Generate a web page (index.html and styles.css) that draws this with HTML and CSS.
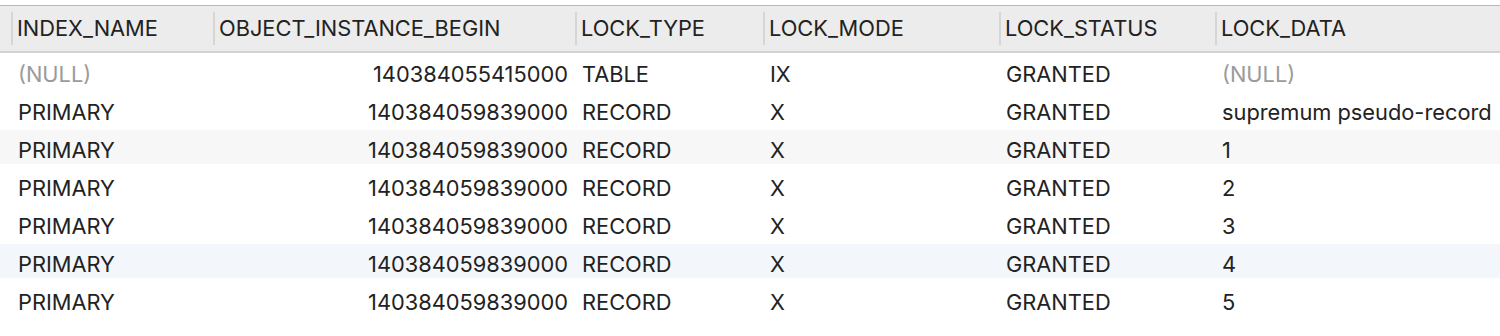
FILE: index.html
```html
<!DOCTYPE html>
<html lang="en">
    <head>
        <meta charset="utf-8" />
        <title>data_locks</title>
        <link rel="stylesheet" href="styles.css">
    </head>
    <body>
        <div id="grid">
            <div class="head">
                <div class="gutter"></div>
                <div class="col">INDEX_NAME</div>
                <div class="col">OBJECT_INSTANCE_BEGIN</div>
                <div class="col">LOCK_TYPE</div>
                <div class="col">LOCK_MODE</div>
                <div class="col">LOCK_STATUS</div>
                <div class="col">LOCK_DATA</div>
            </div>

            <div class="rows">
                <div class="row">
                    <div class="gutter"></div>
                    <div class="cell null">(NULL)</div>
                    <div class="cell num">140384055415000</div>
                    <div class="cell">TABLE</div>
                    <div class="cell">IX</div>
                    <div class="cell">GRANTED</div>
                    <div class="cell null">(NULL)</div>
                </div>
                <div class="row">
                    <div class="gutter"></div>
                    <div class="cell">PRIMARY</div>
                    <div class="cell num">140384059839000</div>
                    <div class="cell">RECORD</div>
                    <div class="cell">X</div>
                    <div class="cell">GRANTED</div>
                    <div class="cell">supremum pseudo-record</div>
                </div>
                <div class="row alt">
                    <div class="gutter"></div>
                    <div class="cell">PRIMARY</div>
                    <div class="cell num">140384059839000</div>
                    <div class="cell">RECORD</div>
                    <div class="cell">X</div>
                    <div class="cell">GRANTED</div>
                    <div class="cell">1</div>
                </div>
                <div class="row">
                    <div class="gutter"></div>
                    <div class="cell">PRIMARY</div>
                    <div class="cell num">140384059839000</div>
                    <div class="cell">RECORD</div>
                    <div class="cell">X</div>
                    <div class="cell">GRANTED</div>
                    <div class="cell">2</div>
                </div>
                <div class="row">
                    <div class="gutter"></div>
                    <div class="cell">PRIMARY</div>
                    <div class="cell num">140384059839000</div>
                    <div class="cell">RECORD</div>
                    <div class="cell">X</div>
                    <div class="cell">GRANTED</div>
                    <div class="cell">3</div>
                </div>
                <div class="row hover">
                    <div class="gutter"></div>
                    <div class="cell">PRIMARY</div>
                    <div class="cell num">140384059839000</div>
                    <div class="cell">RECORD</div>
                    <div class="cell">X</div>
                    <div class="cell">GRANTED</div>
                    <div class="cell">4</div>
                </div>
                <div class="row">
                    <div class="gutter"></div>
                    <div class="cell">PRIMARY</div>
                    <div class="cell num">140384059839000</div>
                    <div class="cell">RECORD</div>
                    <div class="cell">X</div>
                    <div class="cell">GRANTED</div>
                    <div class="cell">5</div>
                </div>
            </div>
        </div>
    </body>
</html>
```

FILE: styles.css
```css
* {
    margin: 0;
    padding: 0;
    box-sizing: border-box;
}

body {
    background: #fff;
    color: #222;
    font-family: "Inter", "Liberation Sans", sans-serif;
    font-size: 21.8px;
    overflow: hidden;
}

#grid {
    padding-top: 5px;
}

.head,
.row {
    display: grid;
    grid-template-columns: 11px 202px 362px 188px 236px 216px 1fr;
    white-space: nowrap;
}

.head {
    height: 48px;
    background: #ececec;
    border-top: 1px solid #b8b8b8;
    border-bottom: 2px solid #d2d2d2;
}

.head .col {
    margin-top: 6px;
    height: 33px;
    line-height: 33px;
    padding-left: 4px;
    border-left: 2px solid #d6d6d6;
}

.rows {
    padding-top: 1px;
    display: flex;
    flex-direction: column;
    gap: 4px;
}

.row {
    height: 34px;
}

.row.alt {
    background: #f7f7f7;
}

.row.hover {
    background: #f3f7fc;
}

.cell {
    padding: 5px 7px 0 7px;
    line-height: 31px;
    overflow: hidden;
}

.cell.num {
    text-align: right;
}

.cell.null {
    color: #9b9b9b;
}
```
